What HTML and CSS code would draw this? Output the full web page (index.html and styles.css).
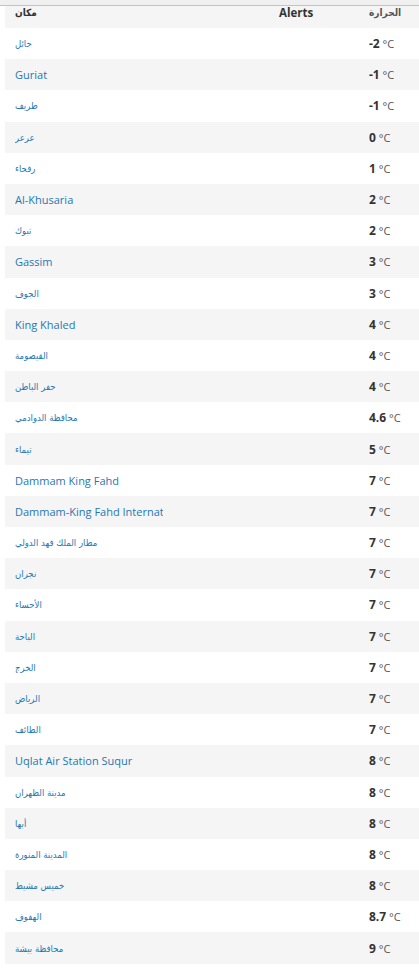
FILE: index.html
```html
<!DOCTYPE html>
<html lang="ar">
<head>
        <meta charset="UTF-8">
        <meta name="viewport" content="width=device-width, initial-scale=1.0">
        <title>الحرارة</title>
        <link rel="stylesheet" href="styles.css">
</head>
<body>
        <div class="topbar"></div>

        <div class="table">
                <div class="row head">
                        <div class="cell name ar">مكان</div>
                        <div class="cell alerts">Alerts</div>
                        <div class="cell temp ar">الحرارة</div>
                </div>

                <div class="row"><div class="cell name"><a class="ar" href="#">حائل</a></div><div class="cell alerts"></div><div class="cell temp"><b>-2</b> °C</div></div>
                <div class="row"><div class="cell name"><a href="#">Guriat</a></div><div class="cell alerts"></div><div class="cell temp"><b>-1</b> °C</div></div>
                <div class="row"><div class="cell name"><a class="ar" href="#">طريف</a></div><div class="cell alerts"></div><div class="cell temp"><b>-1</b> °C</div></div>
                <div class="row"><div class="cell name"><a class="ar" href="#">عرعر</a></div><div class="cell alerts"></div><div class="cell temp"><b>0</b> °C</div></div>
                <div class="row"><div class="cell name"><a class="ar" href="#">رفحاء</a></div><div class="cell alerts"></div><div class="cell temp"><b>1</b> °C</div></div>
                <div class="row"><div class="cell name"><a href="#">Al-Khusaria</a></div><div class="cell alerts"></div><div class="cell temp"><b>2</b> °C</div></div>
                <div class="row"><div class="cell name"><a class="ar" href="#">تبوك</a></div><div class="cell alerts"></div><div class="cell temp"><b>2</b> °C</div></div>
                <div class="row"><div class="cell name"><a href="#">Gassim</a></div><div class="cell alerts"></div><div class="cell temp"><b>3</b> °C</div></div>
                <div class="row"><div class="cell name"><a class="ar" href="#">الجوف</a></div><div class="cell alerts"></div><div class="cell temp"><b>3</b> °C</div></div>
                <div class="row"><div class="cell name"><a href="#">King Khaled</a></div><div class="cell alerts"></div><div class="cell temp"><b>4</b> °C</div></div>
                <div class="row"><div class="cell name"><a class="ar" href="#">القيصومة</a></div><div class="cell alerts"></div><div class="cell temp"><b>4</b> °C</div></div>
                <div class="row"><div class="cell name"><a class="ar" href="#">حفر الباطن</a></div><div class="cell alerts"></div><div class="cell temp"><b>4</b> °C</div></div>
                <div class="row"><div class="cell name"><a class="ar" href="#">محافظة الدوادمي</a></div><div class="cell alerts"></div><div class="cell temp"><b>4.6</b> °C</div></div>
                <div class="row"><div class="cell name"><a class="ar" href="#">تيماء</a></div><div class="cell alerts"></div><div class="cell temp"><b>5</b> °C</div></div>
                <div class="row"><div class="cell name"><a href="#">Dammam King Fahd</a></div><div class="cell alerts"></div><div class="cell temp"><b>7</b> °C</div></div>
                <div class="row"><div class="cell name"><a href="#">Dammam-King Fahd International</a></div><div class="cell alerts"></div><div class="cell temp"><b>7</b> °C</div></div>
                <div class="row"><div class="cell name"><a class="ar" href="#">مطار الملك فهد الدولي</a></div><div class="cell alerts"></div><div class="cell temp"><b>7</b> °C</div></div>
                <div class="row"><div class="cell name"><a class="ar" href="#">نجران</a></div><div class="cell alerts"></div><div class="cell temp"><b>7</b> °C</div></div>
                <div class="row"><div class="cell name"><a class="ar" href="#">الأحساء</a></div><div class="cell alerts"></div><div class="cell temp"><b>7</b> °C</div></div>
                <div class="row"><div class="cell name"><a class="ar" href="#">الباحة</a></div><div class="cell alerts"></div><div class="cell temp"><b>7</b> °C</div></div>
                <div class="row"><div class="cell name"><a class="ar" href="#">الخرج</a></div><div class="cell alerts"></div><div class="cell temp"><b>7</b> °C</div></div>
                <div class="row"><div class="cell name"><a class="ar" href="#">الرياض</a></div><div class="cell alerts"></div><div class="cell temp"><b>7</b> °C</div></div>
                <div class="row"><div class="cell name"><a class="ar" href="#">الطائف</a></div><div class="cell alerts"></div><div class="cell temp"><b>7</b> °C</div></div>
                <div class="row"><div class="cell name"><a href="#">Uqlat Air Station Suqur</a></div><div class="cell alerts"></div><div class="cell temp"><b>8</b> °C</div></div>
                <div class="row"><div class="cell name"><a class="ar" href="#">مدينة الظهران</a></div><div class="cell alerts"></div><div class="cell temp"><b>8</b> °C</div></div>
                <div class="row"><div class="cell name"><a class="ar" href="#">أبها</a></div><div class="cell alerts"></div><div class="cell temp"><b>8</b> °C</div></div>
                <div class="row"><div class="cell name"><a class="ar" href="#">المدينة المنورة</a></div><div class="cell alerts"></div><div class="cell temp"><b>8</b> °C</div></div>
                <div class="row"><div class="cell name"><a class="ar" href="#">خميس مشيط</a></div><div class="cell alerts"></div><div class="cell temp"><b>8</b> °C</div></div>
                <div class="row"><div class="cell name"><a class="ar" href="#">الهفوف</a></div><div class="cell alerts"></div><div class="cell temp"><b>8.7</b> °C</div></div>
                <div class="row"><div class="cell name"><a class="ar" href="#">محافظة بيشة</a></div><div class="cell alerts"></div><div class="cell temp"><b>9</b> °C</div></div>
        </div>
</body>
</html>
```

FILE: styles.css
```css
body {
        font-family: "Open Sans", "DejaVu Sans", sans-serif;
        font-size: 11px;
        color: #333;
        background-color: #fff;
        margin: 0;
        padding: 0;
}

.topbar {
        height: 5px;
        background-color: #f0f0f0;
        border-bottom: 1px solid #c4c4c4;
}

.table {
        margin-left: 5px;
}

.row {
        display: grid;
        grid-template-columns: 264px 90px 1fr;
        height: 31.2px;
        align-items: center;
}

.row:nth-child(odd) {
        background-color: #f5f5f5;
}

.row.head {
        height: 22px;
        align-items: start;
        font-weight: bold;
        color: #333;
}

.row.head .cell {
        line-height: 14px;
        padding-top: 0;
        overflow: visible;
}

.head .alerts {
        font-size: 11.5px;
}

.head .ar {
        font-size: 10px;
}

.cell {
        padding: 0 10px;
        white-space: nowrap;
        overflow: hidden;
}

.ar {
        font-family: "DejaVu Sans Condensed", "DejaVu Sans", sans-serif;
        font-size: 9.5px;
}

.name a {
        display: block;
        width: 148px;
        overflow: hidden;
        color: #1f77b4;
        text-decoration: none;
}

.temp {
        color: #555;
}

.temp b {
        color: #333;
        font-size: 12px;
}
```
